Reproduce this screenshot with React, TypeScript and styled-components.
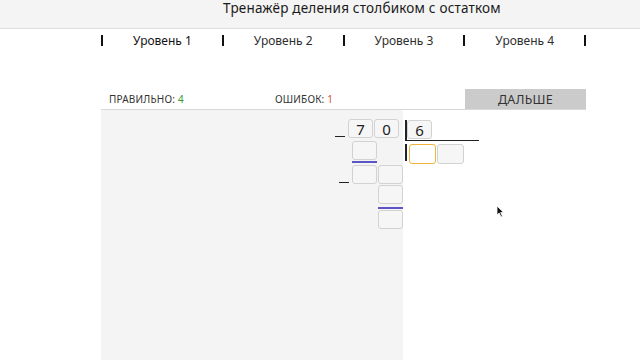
import styled, { createGlobalStyle } from "styled-components"

const Global = createGlobalStyle`
  html, body {
    margin: 0;
    padding: 0;
    background: #fff;
    font-family: "Noto Sans", "DejaVu Sans", sans-serif;
    color: #222;
  }
`

const Page = styled.div`
  position: relative;
  width: 640px;
  height: 360px;
  overflow: hidden;
  display: flex;
  flex-direction: column;
`

const Header = styled.header`
  height: 29px;
  background: #f4f4f4;
  border-bottom: 1px solid #dedede;
  box-sizing: border-box;
  text-align: center;
  padding-left: 84px;
  font-size: 13.5px;
  line-height: 17px;
  letter-spacing: 0.2px;
  color: #1a1a1a;
`

const Main = styled.div`
  margin-left: 101px;
  width: 485px;
  display: flex;
  flex-direction: column;
  flex: 1;
`

const Nav = styled.nav`
  display: flex;
  align-items: center;
  height: 23px;
`

const NavBar = styled.span`
  width: 2px;
  height: 11px;
  background: #111;
  flex: none;
`

const NavItem = styled.span<{ $active?: boolean }>`
  width: 119px;
  text-align: center;
  font-size: 12px;
  color: ${(p) => (p.$active ? "#111" : "#2e2e2e")};
`

const Status = styled.div`
  display: flex;
  align-items: center;
  height: 20px;
  margin-top: 37px;
  border-bottom: 1px solid #d8d8d8;
  font-size: 10px;
  letter-spacing: 0.2px;
  color: #333;
`

const Stat = styled.span<{ $w: number }>`
  width: ${(p) => p.$w}px;
  padding-left: 8px;
  box-sizing: border-box;
`

const Num = styled.span<{ $c: string }>`
  color: ${(p) => p.$c};
`

const NextButton = styled.button`
  margin-left: auto;
  width: 121px;
  height: 20px;
  border: none;
  background: #cbcbcb;
  font-family: inherit;
  font-size: 12.5px;
  color: #333;
  letter-spacing: 0.3px;
  padding: 0;
`

const Work = styled.div`
  flex: 1;
  display: flex;
`

const LeftPanel = styled.div`
  width: 302px;
  background: #f4f4f4;
  display: flex;
  flex-direction: column;
  align-items: flex-end;
  padding-top: 9px;
  box-sizing: border-box;
`

const RightPanel = styled.div`
  flex: 1;
  display: flex;
  flex-direction: column;
  padding-top: 10px;
`

const Row = styled.div<{ $mt?: number; $mr?: number }>`
  display: flex;
  gap: 1px;
  margin-top: ${(p) => p.$mt ?? 0}px;
  margin-right: ${(p) => p.$mr ?? 0}px;
`

const Minus = styled.span`
  width: 10px;
  height: 1.5px;
  background: #222;
  align-self: flex-end;
  margin-right: 2px;
  margin-bottom: 1px;
`

const Cell = styled.div<{ $w?: number; $h?: number; $focus?: boolean }>`
  width: ${(p) => p.$w ?? 25}px;
  height: ${(p) => p.$h ?? 19}px;
  box-sizing: border-box;
  border: ${(p) => (p.$focus ? "1.5px solid #f0b43c" : "1px solid #d2d2d2")};
  border-radius: 3px;
  background: ${(p) => (p.$focus ? "#fff" : "#f6f6f6")};
  display: flex;
  align-items: center;
  justify-content: center;
  font-size: 15px;
  color: #222;
`

const Underline = styled.div<{ $mt: number; $mr: number }>`
  width: 25px;
  height: 2px;
  background: #5a54c4;
  margin-top: ${(p) => p.$mt}px;
  margin-right: ${(p) => p.$mr}px;
`

const Divisor = styled.div`
  display: flex;
  width: 72px;
  margin-left: 2px;
  height: 20px;
  border-left: 2px solid #222;
  border-bottom: 1.5px solid #222;
`

const QuotientRow = styled.div`
  display: flex;
  gap: 1px;
  margin-left: 2px;
  margin-top: 3px;
  align-items: flex-start;
`

const QBar = styled.span`
  width: 2px;
  height: 17px;
  background: #222;
  margin-right: 1px;
`

const Cursor = styled.svg`
  position: absolute;
  left: 496px;
  top: 205px;
`

export default function App() {
  const levels = ["Уровень 1", "Уровень 2", "Уровень 3", "Уровень 4"]
  return (
    <Page>
      <Global />
      <Header>Тренажёр деления столбиком с остатком</Header>
      <Main>
        <Nav>
          {levels.map((l, i) => [
            <NavBar key={"b" + i} />,
            <NavItem key={l} $active={i === 0}>
              {l}
            </NavItem>,
          ])}
          <NavBar />
        </Nav>
        <Status>
          <Stat $w={166}>
            ПРАВИЛЬНО: <Num $c="#3a9a3a">4</Num>
          </Stat>
          <Stat $w={150}>
            ОШИБОК: <Num $c="#d2522a">1</Num>
          </Stat>
          <NextButton>ДАЛЬШЕ</NextButton>
        </Status>
        <Work>
          <LeftPanel>
            <Row $mr={4}>
              <Minus />
              <Cell>7</Cell>
              <Cell>0</Cell>
            </Row>
            <Row $mt={3} $mr={26}>
              <Cell />
            </Row>
            <Underline $mt={1} $mr={26} />
            <Row $mt={2}>
              <Minus />
              <Cell />
              <Cell />
            </Row>
            <Row $mt={1}>
              <Cell />
            </Row>
            <Underline $mt={3} $mr={0} />
            <Row $mt={1}>
              <Cell />
            </Row>
          </LeftPanel>
          <RightPanel>
            <Divisor>
              <Cell>6</Cell>
            </Divisor>
            <QuotientRow>
              <QBar />
              <Cell $w={27} $h={20} $focus />
              <Cell $w={27} $h={20} />
            </QuotientRow>
          </RightPanel>
        </Work>
      </Main>
      <Cursor width="9" height="13" viewBox="0 0 9 13">
        <path d="M1 1 L1 10 L3.2 8 L5 12 L6.4 11.3 L4.7 7.5 L7.6 7.5 Z" fill="#111" stroke="#fff" strokeWidth="0.8" />
      </Cursor>
    </Page>
  )
}
